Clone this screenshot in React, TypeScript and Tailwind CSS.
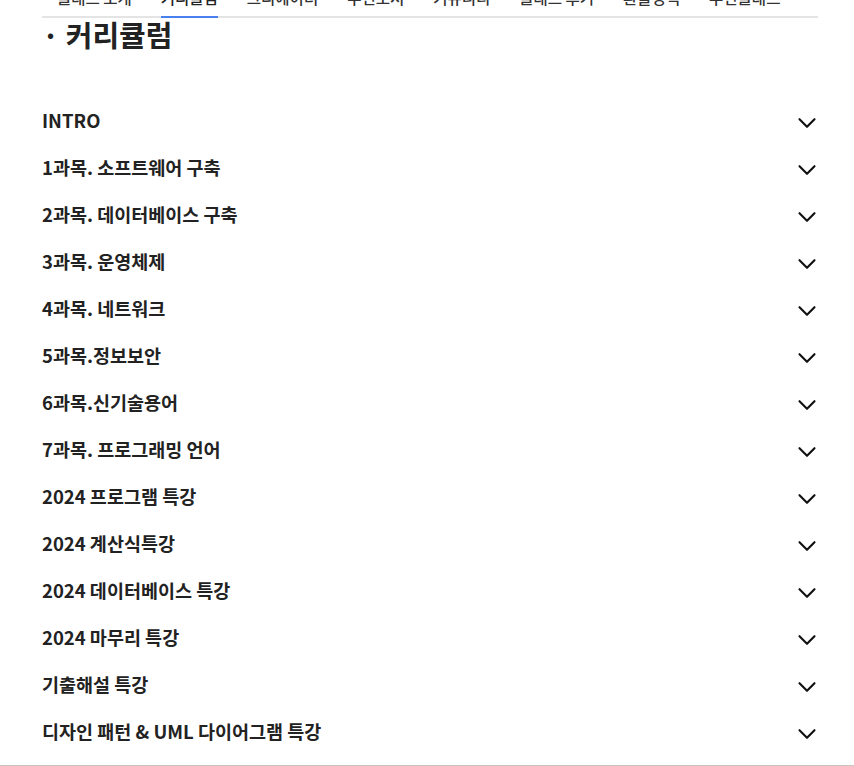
import { ChevronDown } from "lucide-react";

const TABS = [
  "클래스 소개",
  "커리큘럼",
  "크리에이터",
  "추천도서",
  "커뮤니티",
  "클래스 후기",
  "환불정책",
  "추천클래스",
];

const CHAPTERS = [
  "INTRO",
  "1과목. 소프트웨어 구축",
  "2과목. 데이터베이스 구축",
  "3과목. 운영체제",
  "4과목. 네트워크",
  "5과목.정보보안",
  "6과목.신기술용어",
  "7과목. 프로그래밍 언어",
  "2024 프로그램 특강",
  "2024 계산식특강",
  "2024 데이터베이스 특강",
  "2024 마무리 특강",
  "기출해설 특강",
  "디자인 패턴 & UML 다이어그램 특강",
];

export default function App() {
  return (
    <div
      className="min-h-screen bg-white text-[#222] overflow-hidden"
      style={{ fontFamily: "'Noto Sans CJK KR', 'Noto Sans', sans-serif" }}
    >
      <div className="ml-[42px] w-[776px]">
        {/* Tabs */}
        <nav className="-mt-[14px] flex border-b-2 border-[#e4e4e4] pl-[15px] gap-[29px]">
          {TABS.map((tab, i) => (
            <div
              key={tab}
              className={`-mb-[2px] pb-[8px] border-b-2 text-[15.5px] leading-[22px] font-medium whitespace-nowrap ${
                i === 1 ? "border-[#4a7ff0] text-[#222]" : "border-transparent text-[#333]"
              }`}
            >
              {tab}
            </div>
          ))}
        </nav>

        {/* Header */}
        <h2 className="text-[29px] leading-[33px] font-bold text-[#222]">· 커리큘럼</h2>

        {/* Chapters */}
        <ul className="mt-[46px]">
          {CHAPTERS.map((title) => (
            <li key={title} className="h-[47px] flex items-center justify-between">
              <span className="text-[18.5px] font-bold text-[#222] leading-none">{title}</span>
              <ChevronDown className="mt-[5px] mr-[-4px] w-[30px] h-[30px] text-[#111]" strokeWidth={1.7} />
            </li>
          ))}
        </ul>
      </div>
      <div className="mt-[10px] border-t border-[#c9c5bd]" />
    </div>
  );
}
